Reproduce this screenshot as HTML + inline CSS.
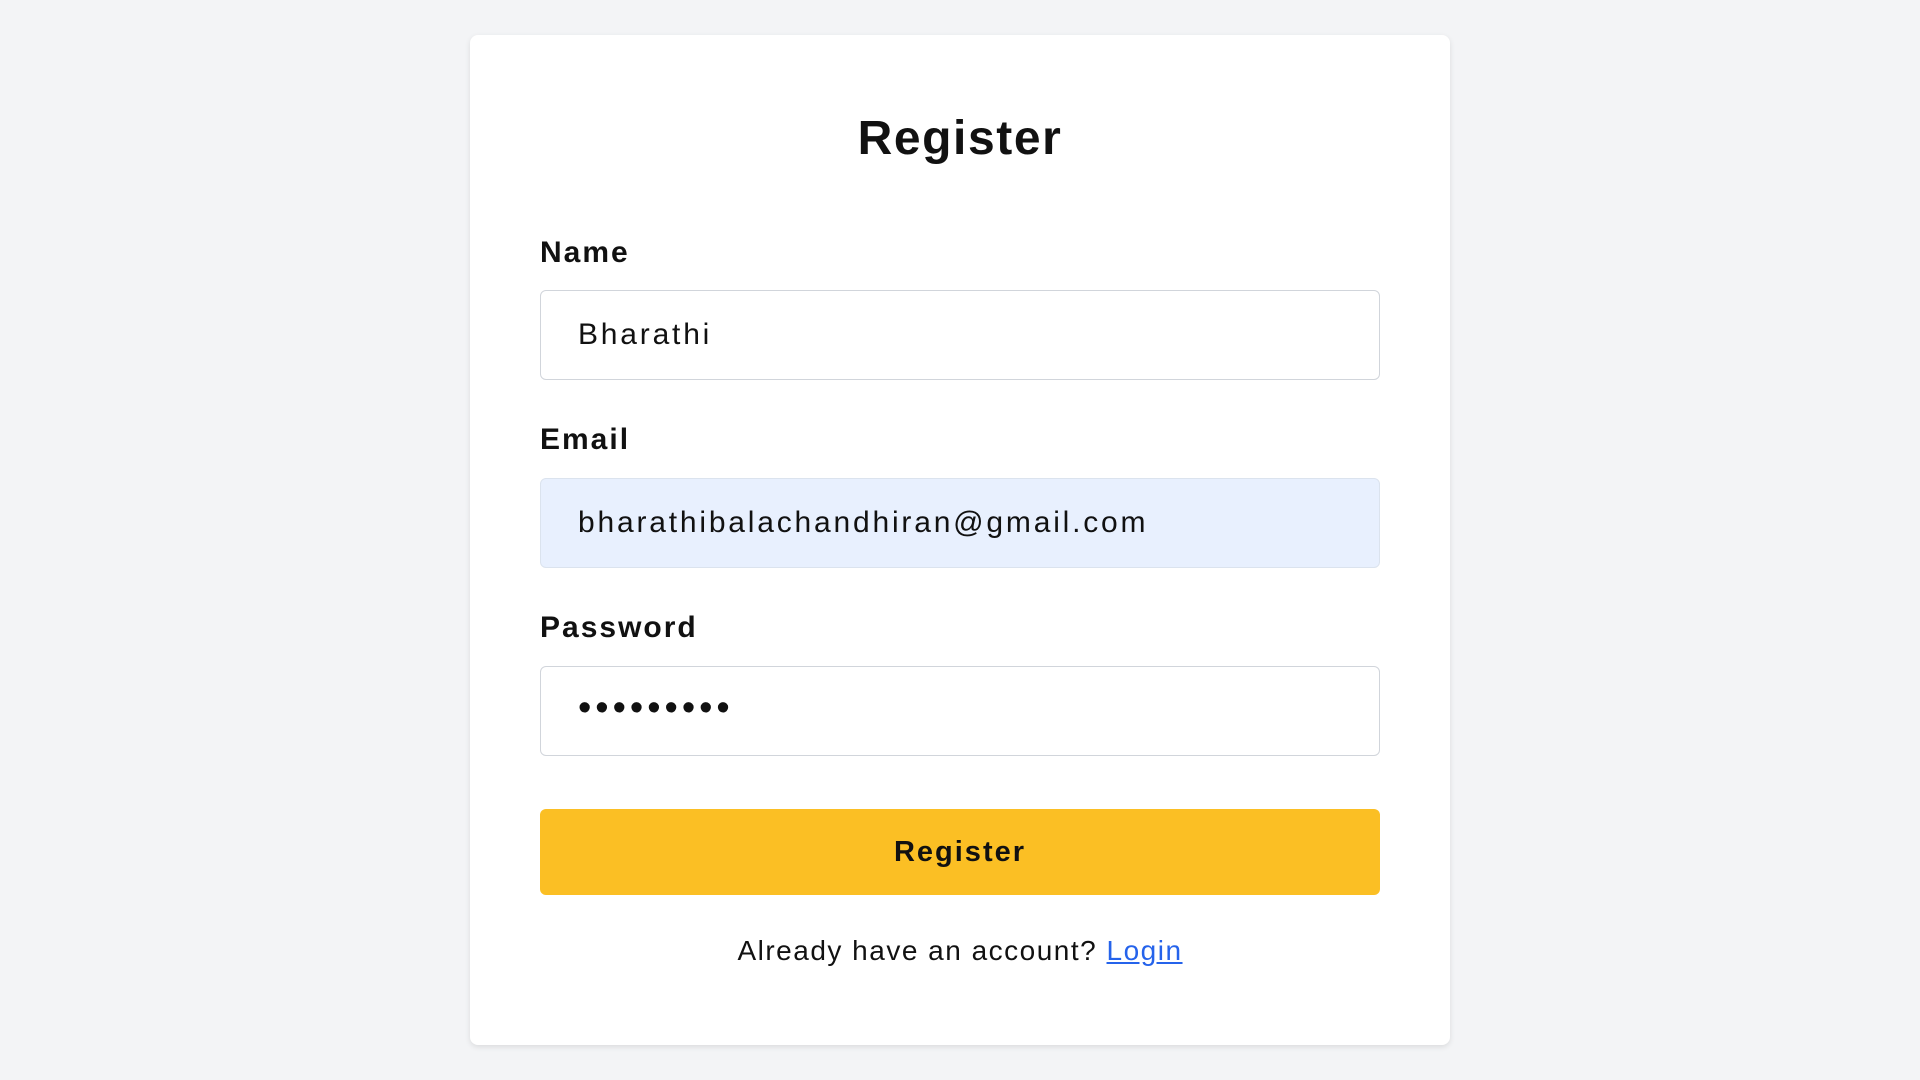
<!DOCTYPE html>
<html><head><style>
html,body{margin:0;padding:0;width:1920px;height:1080px;background:#f3f4f6;font-family:"Liberation Sans",sans-serif;overflow:hidden}
.card{position:absolute;left:470px;top:35px;width:980px;height:1010px;background:#fff;border-radius:8px;box-shadow:0 2px 6px rgba(0,0,0,0.1)}
h1{position:absolute;left:0;right:0;top:74px;margin:0;text-align:center;font-size:48px;font-weight:bold;color:#111;line-height:60px;letter-spacing:1.6px}
.lbl{position:absolute;left:70px;font-size:30px;font-weight:bold;color:#111;line-height:36px;letter-spacing:2px}
.inp{position:absolute;left:70px;height:88px;border:1px solid #d1d5db;border-radius:6px;box-sizing:content-box;font-size:30px;line-height:88px;padding-left:37px;width:801px;color:#111;letter-spacing:2.8px}
.btn{position:absolute;left:70px;top:774px;width:840px;height:86px;background:#fbbf24;border-radius:6px;text-align:center;line-height:86px;font-size:29px;font-weight:bold;color:#111;letter-spacing:2px}
.foot{position:absolute;left:0;right:0;top:898px;text-align:center;font-size:28px;color:#111;line-height:36px;letter-spacing:1.5px}
.foot a{color:#2563eb;text-decoration:underline}
</style></head><body>
<div class="card">
<h1>Register</h1>
<div class="lbl" style="top:200px">Name</div>
<div class="inp" style="top:255px">Bharathi</div>
<div class="lbl" style="top:387px">Email</div>
<div class="inp" style="top:443px;background:#e8f0fe;border-color:#dbe3ee">bharathibalachandhiran@gmail.com</div>
<div class="lbl" style="top:575px">Password</div>
<div class="inp" style="top:631px;letter-spacing:4px;line-height:82px;font-size:38px">•••••••••</div>
<div class="btn">Register</div>
<div class="foot">Already have an account? <a>Login</a></div>
</div>
</body></html>
